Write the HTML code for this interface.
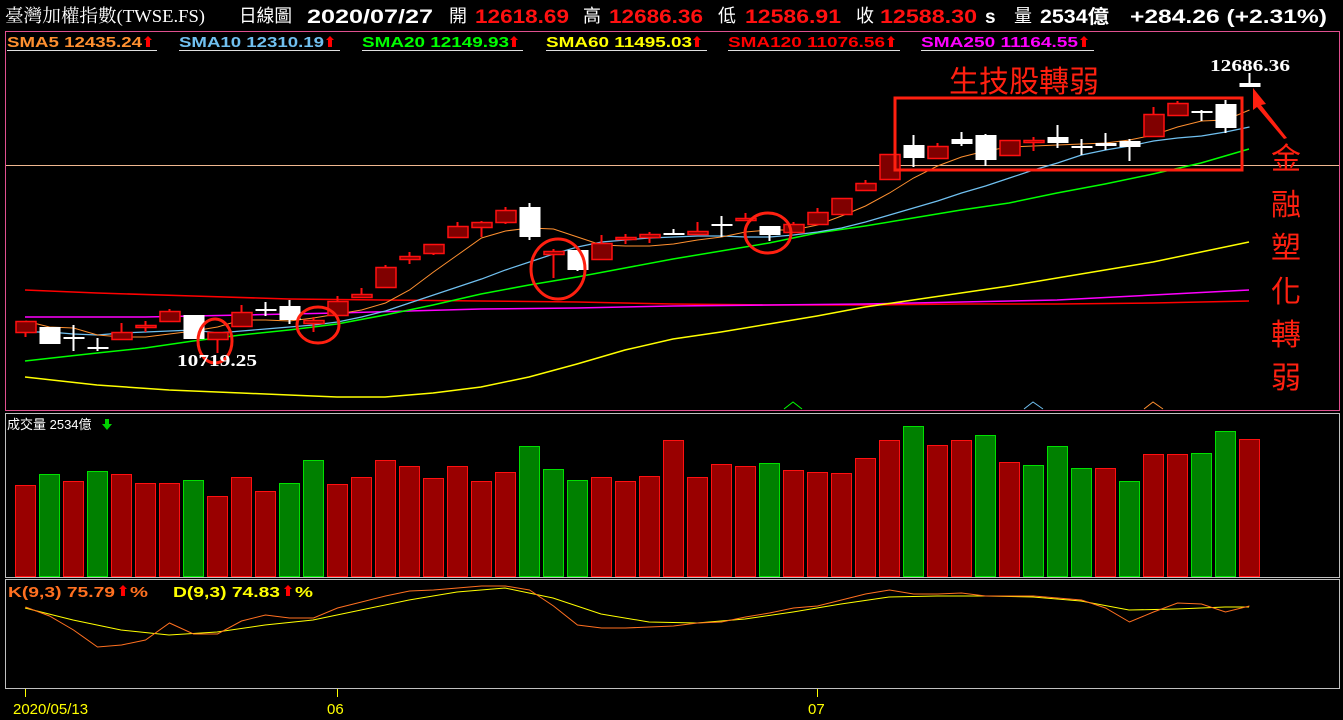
<!DOCTYPE html>
<html><head><meta charset="utf-8"><style>
html,body{margin:0;padding:0;background:#000;width:1343px;height:720px;overflow:hidden}
svg{display:block}
.h{font-family:"Liberation Sans","Noto Sans CJK TC",sans-serif;font-size:18px;fill:#fff}
.b{font-weight:bold;font-size:19px}
.rd{fill:#ff1010}
.s{font-family:"Liberation Sans",sans-serif;font-size:15px;font-weight:bold}
</style></head><body>
<svg id="c" width="1343" height="720" xmlns="http://www.w3.org/2000/svg">
<rect width="1343" height="720" fill="#000"/>
<!-- header -->
<text class="h" x="5" y="22" textLength="200" lengthAdjust="spacingAndGlyphs" style="font-family:'Liberation Serif','Noto Serif CJK SC',serif">臺灣加權指數(TWSE.FS)</text>
<text class="h" x="239" y="22" textLength="53" lengthAdjust="spacingAndGlyphs">日線圖</text>
<text class="h b" x="307" y="23" textLength="126" lengthAdjust="spacingAndGlyphs">2020/07/27</text>
<text class="h" x="449" y="22">開</text><text class="h b rd" x="475" y="23" textLength="94" lengthAdjust="spacingAndGlyphs">12618.69</text>
<text class="h" x="583" y="22">高</text><text class="h b rd" x="609" y="23" textLength="94" lengthAdjust="spacingAndGlyphs">12686.36</text>
<text class="h" x="718" y="22">低</text><text class="h b rd" x="745" y="23" textLength="96" lengthAdjust="spacingAndGlyphs">12586.91</text>
<text class="h" x="856" y="22">收</text><text class="h b rd" x="880" y="23" textLength="97" lengthAdjust="spacingAndGlyphs">12588.30</text>
<text class="h b" x="985" y="23">s</text>
<text class="h" x="1014" y="22">量</text><text class="h b" x="1040" y="23" textLength="69" lengthAdjust="spacingAndGlyphs">2534億</text>
<text class="h b" x="1130" y="23" textLength="197" lengthAdjust="spacingAndGlyphs">+284.26 (+2.31%)</text>
<!-- panels -->
<rect x="5.5" y="31.5" width="1334" height="379" fill="none" stroke="#e0508f" stroke-width="1"/>
<rect x="5.5" y="413.5" width="1334" height="164" fill="none" stroke="#c0c0c0" stroke-width="1"/>
<rect x="5.5" y="579.5" width="1334" height="109" fill="none" stroke="#c0c0c0" stroke-width="1"/>
<!-- SMA labels -->
<g class="s">
<text x="7" y="47" fill="#ff9030" textLength="135" lengthAdjust="spacingAndGlyphs">SMA5 12435.24</text>
<text x="179" y="47" fill="#70c0f0" textLength="145" lengthAdjust="spacingAndGlyphs">SMA10 12310.19</text>
<text x="362" y="47" fill="#00ff00" textLength="147" lengthAdjust="spacingAndGlyphs">SMA20 12149.93</text>
<text x="546" y="47" fill="#ffff00" textLength="146" lengthAdjust="spacingAndGlyphs">SMA60 11495.03</text>
<text x="728" y="47" fill="#ff0000" textLength="157" lengthAdjust="spacingAndGlyphs">SMA120 11076.56</text>
<text x="921" y="47" fill="#ff00ff" textLength="157" lengthAdjust="spacingAndGlyphs">SMA250 11164.55</text>
</g>
<g stroke="#e0e0e0" stroke-width="1">
<line x1="7" y1="50.5" x2="157" y2="50.5"/><line x1="179" y1="50.5" x2="340" y2="50.5"/>
<line x1="362" y1="50.5" x2="523" y2="50.5"/><line x1="546" y1="50.5" x2="707" y2="50.5"/>
<line x1="728" y1="50.5" x2="900" y2="50.5"/><line x1="921" y1="50.5" x2="1094" y2="50.5"/>
</g>
<g id="arrows"></g>
<line x1="6" y1="165.5" x2="1339" y2="165.5" stroke="#f0b890" stroke-width="1"/>
<g id="lines"></g>
<g id="candles"></g>
<polyline points="784,409 793,402 802,409" fill="none" stroke="#00ff00"/>
<polyline points="1024,409 1033,402 1043,409" fill="none" stroke="#70c0f0"/>
<polyline points="1144,409 1153,402 1163,409" fill="none" stroke="#ff9030"/>
<!-- annotations -->
<g fill="none" stroke="#ff2010" stroke-width="3">
<ellipse cx="215" cy="341" rx="17" ry="22"/>
<ellipse cx="318" cy="325" rx="21" ry="18"/>
<ellipse cx="558" cy="269" rx="27" ry="30"/>
<ellipse cx="768" cy="233" rx="23" ry="20"/>
<rect x="895" y="98" width="347" height="72"/>
</g>
<polygon points="1253,88 1266,104 1261,105 1287,138 1284,139 1257,107 1253,110" fill="#ff2010"/>
<g font-family="'Liberation Sans','Noto Sans CJK TC',sans-serif" font-size="30" fill="#ff2010">
<text x="949" y="92">生技股轉弱</text>
<text x="1271" y="169">金</text><text x="1271" y="215">融</text><text x="1271" y="258">塑</text>
<text x="1271" y="302">化</text><text x="1271" y="345">轉</text><text x="1271" y="388">弱</text>
</g>
<g font-family="'Liberation Serif',serif" font-weight="bold" font-size="17" fill="#fff">
<text x="177" y="366" textLength="80" lengthAdjust="spacingAndGlyphs">10719.25</text>
<text x="1210" y="71" textLength="80" lengthAdjust="spacingAndGlyphs">12686.36</text>
</g>
<!-- volume -->
<text x="7" y="429" font-family="'Liberation Sans','Noto Sans CJK TC',sans-serif" font-size="13" fill="#fff">成交量 2534億</text>
<polygon points="105,419 109,419 109,424 112,424 107,430 102,424 105,424" fill="#00d000"/>
<g id="vol"></g>
<!-- KD -->
<g class="s"><text x="8" y="597" fill="#ff7020" textLength="107" lengthAdjust="spacingAndGlyphs">K(9,3) 75.79</text><text x="130" y="597" fill="#ff7020" textLength="18" lengthAdjust="spacingAndGlyphs">%</text>
<text x="173" y="597" fill="#ffff00" textLength="107" lengthAdjust="spacingAndGlyphs">D(9,3) 74.83</text><text x="295" y="597" fill="#ffff00" textLength="18" lengthAdjust="spacingAndGlyphs">%</text></g>
<polygon points="123,585 127,589 125,589 125,596 121,596 121,589 119,589" fill="#ff0000"/>
<polygon points="288,585 292,589 290,589 290,596 286,596 286,589 284,589" fill="#ff0000"/>
<g id="kd"></g>
<!-- axis -->
<g stroke="#ffff00"><line x1="25.5" y1="689" x2="25.5" y2="697"/><line x1="337.5" y1="689" x2="337.5" y2="697"/><line x1="817.5" y1="689" x2="817.5" y2="697"/></g>
<g font-family="'Liberation Sans',sans-serif" font-size="15" fill="#ffff00">
<text x="13" y="714">2020/05/13</text><text x="327" y="714">06</text><text x="808" y="714">07</text></g>
</svg>
<script>
var NS="http://www.w3.org/2000/svg";
function el(p,t,a){var e=document.createElementNS(NS,t);for(var k in a)e.setAttribute(k,a[k]);document.getElementById(p).appendChild(e);return e;}
[148,330,514,697,891,1084].forEach(function(x){var y=36;
el("arrows","polygon",{points:(x)+","+y+" "+(x+4)+","+(y+4)+" "+(x+2)+","+(y+4)+" "+(x+2)+","+(y+11)+" "+(x-2)+","+(y+11)+" "+(x-2)+","+(y+4)+" "+(x-4)+","+(y+4),fill:"#ff0000"});});
var C=[["r",321,332,321,337],["w",327,344,327,344],["w",337,338,325,351],["w",347,349,338,351],["r",332,339,323,339],["r",325,327,321,332],["r",311,321,309,321],["w",315,339,315,339],["r",332,339,332,353],["r",312,326,305,326],["w",309,310,302,316],["w",306,320,300,324],["r",320,323,317,332],["r",301,315,296,315],["r",294,297,288,297],["r",267,287,265,287],["r",256,259,252,264],["r",244,253,244,255],["r",226,237,222,238],["r",222,227,221,237],["r",210,222,207,224],["w",207,237,203,240],["r",251,254,249,278],["w",250,270,250,271],["r",243,259,235,259],["r",237,239,234,244],["r",234,237,232,243],["w",233,234,229,235],["r",231,234,222,234],["w",224,225,216,237],["r",218,220,213,220],["w",226,235,226,241],["r",224,232,222,232],["r",212,224,208,224],["r",198,214,198,214],["r",183,190,180,190],["r",154,179,154,179],["w",145,158,135,167],["r",146,158,143,158],["w",139,144,132,146],["w",135,160,134,166],["r",140,155,140,155],["r",140,142,137,151],["w",137,143,125,148],["w",146,148,139,155],["w",143,146,133,150],["w",141,147,139,161],["r",114,136,107,136],["r",103,115,101,115],["w",111,112,110,121],["w",104,128,100,133],["w",83,87,73,87]];
C.forEach(function(c,i){var x=25.5+24*i;var col=c[0]=="r"?"#ff1010":"#fff";
el("candles","line",{x1:x,y1:c[3],x2:x,y2:c[4],stroke:col,"stroke-width":2});
var h=Math.max(c[2]-c[1],2);
if(c[0]=="r")el("candles","rect",{x:x-9.5,y:c[1]+.5,width:20,height:h,fill:"#800000",stroke:"#ff1010","stroke-width":1.5});
else el("candles","rect",{x:x-10,y:c[1],width:21,height:h,fill:"#fff"});});
function pl(g,pts,col,w){el(g,"polyline",{points:pts.map(function(p){return p.join(",")}).join(" "),fill:"none",stroke:col,"stroke-width":w||1});}
var s5=[321,327,328,335,337,337,334,331,327,320,320,321,318,314,310,303,290,272,255,238,231,228,229,237,245,246,246,244,240,237,232,230,230,225,216,206,193,178,166,157,151,147,146,145,144,143,140,135,127,121,120,110];
var s10=[332,332,334,335,333,332,331,330,333,331,329,327,325,322,317,311,303,295,287,279,270,262,254,247,242,240,238,237,236,236,237,237,235,232,228,222,215,208,201,193,186,178,170,163,155,150,146,141,138,136,132,127];
function idx(a){return a.map(function(y,i){return[25.5+24*i,y]});}
pl("lines",[[25,290],[97,293],[193,296],[289,299],[385,300],[481,301],[577,302],[673,304],[769,305],[865,305],[961,304],[1057,304],[1153,303],[1249,301]],"#ff0000",1.5);
pl("lines",[[25,317],[145,317],[337,313],[481,309],[577,308],[673,306],[769,305],[865,304],[961,302],[1057,300],[1153,295],[1249,290]],"#ff00ff",1.5);
pl("lines",[[25,377],[97,385],[169,390],[241,393],[289,395],[337,397],[385,397],[433,393],[481,387],[529,377],[577,364],[625,350],[673,339],[721,332],[769,324],[817,316],[865,307],[913,300],[961,293],[1009,286],[1057,278],[1105,270],[1153,262],[1201,252],[1249,242]],"#ffff00",1.5);
pl("lines",[[25,361],[97,353],[145,348],[193,341],[241,335],[289,330],[337,324],[385,315],[433,305],[481,294],[529,285],[577,277],[625,268],[673,259],[721,251],[769,243],[817,233],[865,226],[913,218],[961,210],[1009,203],[1057,193],[1105,184],[1153,174],[1201,163],[1249,149]],"#00ff00",1.5);
pl("lines",idx(s10),"#70c0f0",1.2);
pl("lines",idx(s5),"#ff9030",1);
var V=[["r",485],["g",474],["r",481],["g",471],["r",474],["r",483],["r",483],["g",480],["r",496],["r",477],["r",491],["g",483],["g",460],["r",484],["r",477],["r",460],["r",466],["r",478],["r",466],["r",481],["r",472],["g",446],["g",469],["g",480],["r",477],["r",481],["r",476],["r",440],["r",477],["r",464],["r",466],["g",463],["r",470],["r",472],["r",473],["r",458],["r",440],["g",426],["r",445],["r",440],["g",435],["r",462],["g",465],["g",446],["g",468],["r",468],["g",481],["r",454],["r",454],["g",453],["g",431],["r",439]];
V.forEach(function(v,i){var x=15.5+24*i;el("vol","rect",{x:x,y:v[1]+.5,width:20,height:576-v[1],fill:v[0]=="r"?"#990000":"#008000",stroke:v[0]=="r"?"#ff1010":"#00e000","stroke-width":1});});
var K=[607,616,630,647,645,640,623,634,634,621,615,618,618,608,602,596,591,590,588,586,586,590,606,625,628,628,627,626,623,622,617,613,608,606,600,594,590,594,594,593,596,596,596,598,600,608,622,612,603,604,612,606];
pl("kd",[[25,608],[73,620],[121,630],[169,635],[217,632],[265,625],[313,620],[361,610],[409,600],[457,592],[505,588],[553,598],[601,614],[649,622],[697,623],[745,619],[793,612],[841,604],[889,597],[937,596],[985,596],[1033,597],[1081,601],[1129,610],[1177,609],[1225,607],[1249,607]],"#ffff00",1);
pl("kd",idx(K),"#ff7020",1);
</script>
</body></html>
